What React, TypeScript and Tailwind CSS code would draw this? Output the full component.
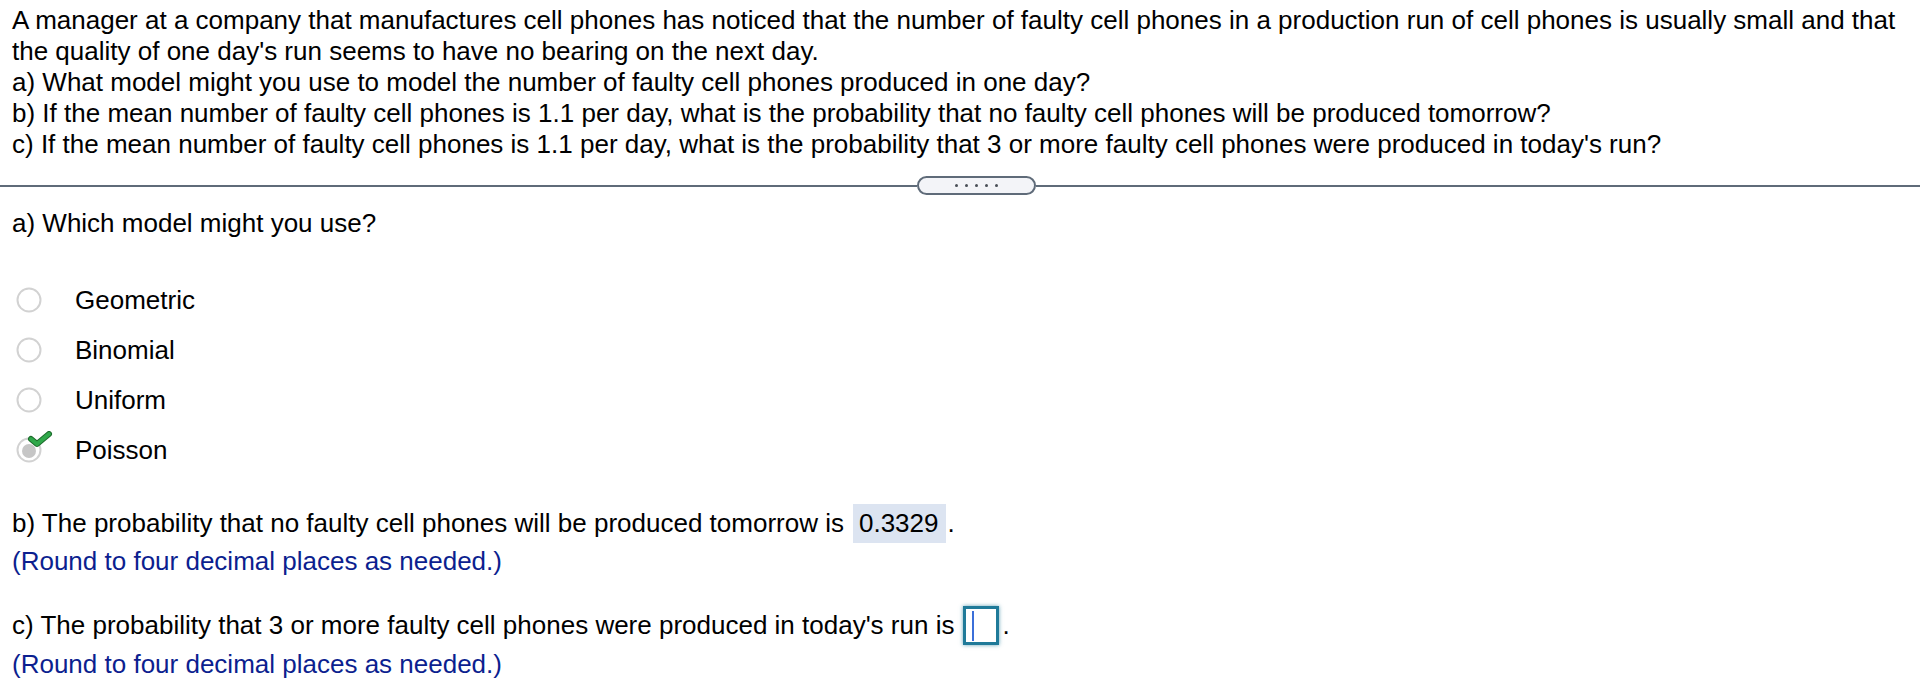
import React from "react";

const Radio = ({ checked }: { checked?: boolean }) => (
  <div className="relative w-[26px] h-[26px] ml-[16px] shrink-0">
    <svg width="26" height="26" viewBox="0 0 26 26" className="absolute left-0 top-0">
      <circle cx="13" cy="13" r="11.5" fill="#ffffff" stroke="#d2d2d2" strokeWidth="2" />
      {checked && <circle cx="13" cy="14" r="7" fill="#c6c6c6" />}
    </svg>
    {checked && (
      <svg width="26" height="18" viewBox="0 0 26 18" className="absolute left-[11px] top-[-6px]">
        <path d="M4 8 L10 13 L22 3" fill="none" stroke="#1d6b2c" strokeWidth="6" strokeLinecap="round" strokeLinejoin="round" />
        <path d="M4 8 L10 13 L22 3" fill="none" stroke="#2fa84a" strokeWidth="4" strokeLinecap="round" strokeLinejoin="round" />
      </svg>
    )}
  </div>
);

const Option = ({ label, checked }: { label: string; checked?: boolean }) => (
  <div className="flex items-center h-[50px]">
    <Radio checked={checked} />
    <span className="ml-[33px]">{label}</span>
  </div>
);

export default function App() {
  return (
    <div className="w-[1920px] h-[692px] bg-white text-black font-['Liberation_Sans',Arial,sans-serif] text-[26px] leading-[31px] overflow-hidden">
      <div className="pt-[5px] pl-[12px] whitespace-nowrap">
        <div>A manager at a company that manufactures cell phones has noticed that the number of faulty cell phones in a production run of cell phones is usually small and that</div>
        <div>the quality of one day's run seems to have no bearing on the next day.</div>
        <div>a) What model might you use to model the number of faulty cell phones produced in one day?</div>
        <div>b) If the mean number of faulty cell phones is 1.1 per day, what is the probability that no faulty cell phones will be produced tomorrow?</div>
        <div>c) If the mean number of faulty cell phones is 1.1 per day, what is the probability that 3 or more faulty cell phones were produced in today's run?</div>
      </div>

      <div className="flex items-center mt-[16px] h-[19px]">
        <div className="w-[917px] h-[2px] bg-[#5f6b79]" />
        <div className="w-[119px] h-[19px] rounded-full border-2 border-[#5f6b79] bg-[#f3f4f8] flex items-center justify-center gap-[7px] shrink-0">
          <span className="w-[3px] h-[3px] rounded-full bg-[#4a4f57]" />
          <span className="w-[3px] h-[3px] rounded-full bg-[#4a4f57]" />
          <span className="w-[3px] h-[3px] rounded-full bg-[#4a4f57]" />
          <span className="w-[3px] h-[3px] rounded-full bg-[#4a4f57]" />
          <span className="w-[3px] h-[3px] rounded-full bg-[#4a4f57]" />
        </div>
        <div className="flex-1 h-[2px] bg-[#5f6b79]" />
      </div>

      <div className="pl-[12px] mt-[13px]">a) Which model might you use?</div>

      <div className="mt-[36px]">
        <Option label="Geometric" />
        <Option label="Binomial" />
        <Option label="Uniform" />
        <Option label="Poisson" checked />
      </div>

      <div className="pl-[12px] mt-[29px] flex items-center h-[39px] whitespace-nowrap">
        <span>b) The probability that no faulty cell phones will be produced tomorrow is</span>
        <span className="ml-[9px] h-[39px] flex items-center pl-[6px] pr-[7px] bg-[#dce4f1]">0.3329</span>
        <span className="ml-[2px]">.</span>
      </div>
      <div className="pl-[12px] mt-[3px] text-[#0c1f8f]">(Round to four decimal places as needed.)</div>

      <div className="pl-[12px] mt-[29px] flex items-center h-[39px] whitespace-nowrap">
        <span>c) The probability that 3 or more faulty cell phones were produced in today's run is</span>
        <span className="ml-[9px] w-[36px] h-[39px] border-[3px] border-[#1f7a99] shadow-[0_0_4px_rgba(31,122,153,0.7)] flex items-center pl-[6px]">
          <span className="w-[2px] h-[30px] bg-[#3b6fd9]" />
        </span>
        <span className="ml-[3px]">.</span>
      </div>
      <div className="pl-[12px] mt-[4px] text-[#0c1f8f]">(Round to four decimal places as needed.)</div>
    </div>
  );
}
